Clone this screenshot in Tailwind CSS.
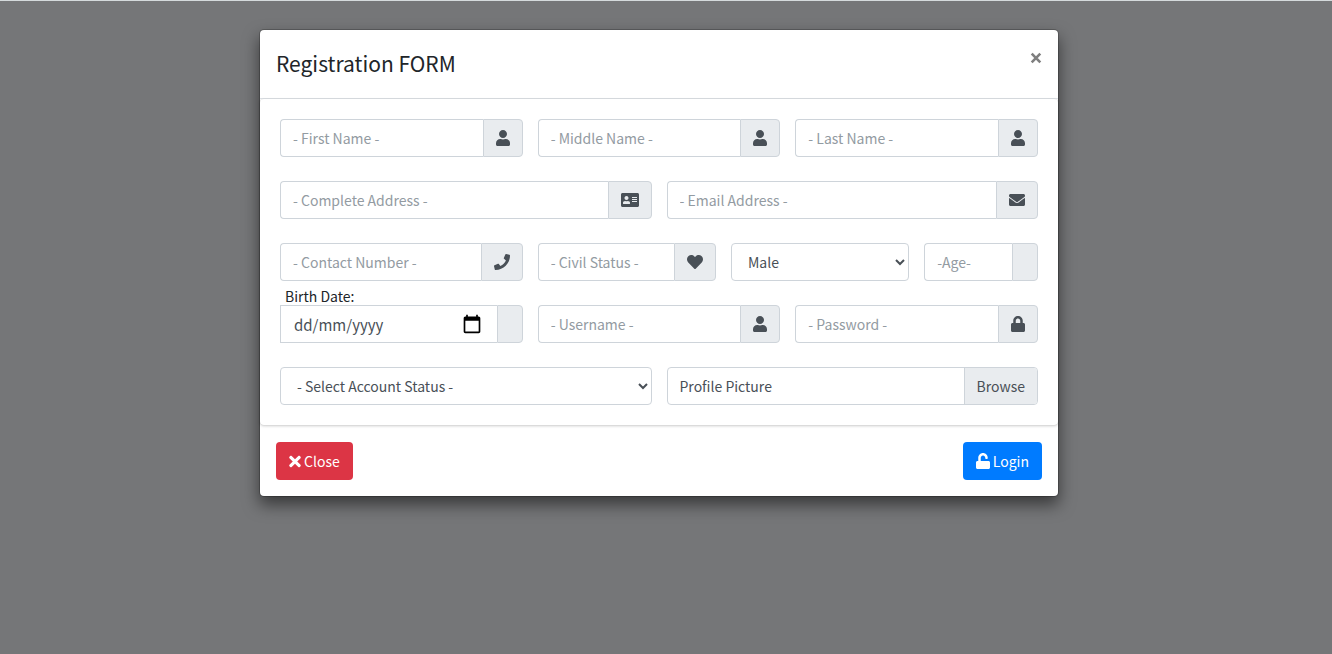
<!DOCTYPE html>
<html lang="en">
<head>
<meta charset="utf-8">
<meta name="viewport" content="width=device-width, initial-scale=1">
<title>Registration FORM</title>
<script src="https://cdn.jsdelivr.net/npm/@tailwindcss/browser@4"></script>
</head>
<body class="min-h-screen border-t border-[#d5dadc] bg-[#757678] pr-[14px] pt-7 font-['Noto_Sans_CJK_SC','Noto_Sans',sans-serif] text-sm leading-6 text-[#212529]">
<svg class="hidden" aria-hidden="true">
  <symbol id="user" viewBox="0 0 448 512"><path d="M224 256c70.7 0 128-57.3 128-128S294.700 0 224 0 96 57.300 96 128s57.300 128 128 128zm89.600 32h-16.700c-22.200 10.200-46.900 16-72.900 16s-50.600-5.800-72.900-16h-16.700C60.200 288 0 348.200 0 422.400V464c0 26.500 21.500 48 48 48h352c26.500 0 48-21.500 48-48v-41.600c0-74.200-60.200-134.400-134.400-134.400z"/></symbol>
  <symbol id="card" viewBox="0 0 576 512"><path fill-rule="evenodd" d="M528 32H48C21.500 32 0 53.500 0 80v352c0 26.500 21.500 48 48 48h480c26.500 0 48-21.500 48-48V80c0-26.500-21.500-48-48-48zM176 128c35.300 0 64 28.700 64 64s-28.700 64-64 64-64-28.700-64-64 28.700-64 64-64zm112 236.800c0 10.600-10 19.200-22.400 19.200H86.400C74 384 64 375.400 64 364.800v-19.200c0-31.800 30.100-57.600 67.200-57.600h5c12.300 5.100 25.700 8 39.800 8s27.600-2.900 39.800-8h5c37.100 0 67.200 25.800 67.200 57.600v19.200zM512 312c0 4.400-3.600 8-8 8H360c-4.400 0-8-3.600-8-8v-16c0-4.400 3.600-8 8-8h144c4.400 0 8 3.600 8 8v16zm0-64c0 4.400-3.600 8-8 8H360c-4.400 0-8-3.600-8-8v-16c0-4.400 3.600-8 8-8h144c4.400 0 8 3.600 8 8v16zm0-64c0 4.400-3.600 8-8 8H360c-4.400 0-8-3.600-8-8v-16c0-4.400 3.600-8 8-8h144c4.400 0 8 3.600 8 8v16z"/></symbol>
  <symbol id="envelope" viewBox="0 0 512 512"><path d="M502.300 190.800c3.900-3.100 9.700-.2 9.700 4.700V400c0 26.500-21.500 48-48 48H48c-26.500 0-48-21.500-48-48V195.600c0-5 5.700-7.800 9.700-4.700 22.400 17.400 52.100 39.500 154.100 113.600 21.100 15.400 56.700 47.800 92.200 47.600 35.700.3 72-32.800 92.300-47.600 102-74.100 131.600-96.300 154-113.700zM256 320c23.200.4 56.600-29.200 73.400-41.400 132.700-96.300 142.800-104.700 173.400-128.700 5.800-4.500 9.200-11.500 9.200-18.900v-19c0-26.500-21.500-48-48-48H48c-26.500 0-48 21.500-48 48v19c0 7.400 3.400 14.300 9.200 18.900 30.600 23.900 40.700 32.400 173.400 128.700 16.800 12.200 50.200 41.800 73.400 41.400z"/></symbol>
  <symbol id="phone" viewBox="0 0 512 512"><path d="M493.400 24.600l-104-24c-11.300-2.600-22.900 3.300-27.500 13.900l-48 112c-4.200 9.800-1.400 21.300 6.900 28l60.600 49.600c-36 76.700-98.900 140.500-177.200 177.200l-49.600-60.600c-6.800-8.300-18.200-11.100-28-6.900l-112 48C3.900 366.500-2 378.100.6 389.400l24 104C27.100 504.200 36.700 512 48 512c256.100 0 464-207.500 464-464 0-11.200-7.700-20.900-18.600-23.400z"/></symbol>
  <symbol id="heart" viewBox="0 0 512 512"><path d="M462.300 62.600C407.500 15.900 326 24.300 275.700 76.200L256 96.500l-19.700-20.300C186.100 24.300 104.500 15.900 49.700 62.600c-62.800 53.600-66.100 149.800-9.900 207.900l193.500 199.800c12.500 12.900 32.800 12.900 45.300 0l193.500-199.800c56.300-58.100 53-154.300-9.800-207.900z"/></symbol>
  <symbol id="lock" viewBox="0 0 448 512"><path d="M400 224h-24v-72C376 68.200 307.800 0 224 0S72 68.200 72 152v72H48c-26.500 0-48 21.500-48 48v192c0 26.500 21.500 48 48 48h352c26.500 0 48-21.500 48-48V272c0-26.500-21.500-48-48-48zm-104 0H152v-72c0-39.700 32.300-72 72-72s72 32.300 72 72v72z"/></symbol>
  <symbol id="unlock" viewBox="0 0 448 512"><path d="M400 256H152V152.900c0-39.600 31.700-72.500 71.300-72.900 40-.4 72.700 32.100 72.700 72v16c0 13.300 10.700 24 24 24h32c13.300 0 24-10.700 24-24v-16C376 68 307.500-.3 223.500 0 139.500.3 72 69.500 72 153.500V256H48c-26.500 0-48 21.500-48 48v160c0 26.500 21.500 48 48 48h352c26.500 0 48-21.500 48-48V304c0-26.500-21.500-48-48-48z"/></symbol>
  <symbol id="times" viewBox="0 0 352 512"><path d="M242.700 256l100.100-100.100c12.300-12.300 12.300-32.200 0-44.500l-22.200-22.200c-12.300-12.300-32.200-12.300-44.500 0L176 189.300 75.900 89.200c-12.300-12.300-32.200-12.300-44.500 0L9.200 111.500c-12.300 12.300-12.300 32.200 0 44.500L109.300 256 9.200 356.100c-12.300 12.300-12.300 32.200 0 44.500l22.200 22.200c12.300 12.300 32.200 12.300 44.500 0L176 322.700l100.100 100.100c12.300 12.300 32.200 12.300 44.500 0l22.200-22.200c12.300-12.300 12.300-32.200 0-44.500L242.700 256z"/></symbol>
  <symbol id="calendar" viewBox="0 0 24 24"><path d="M20 3h-1V1h-2v2H7V1H5v2H4c-1.100 0-2 .9-2 2v16c0 1.100.9 2 2 2h16c1.100 0 2-.9 2-2V5c0-1.100-.9-2-2-2zm0 18H4V8h16v13z"/></symbol>
</svg>

<div role="dialog" aria-labelledby="title" class="mx-auto max-w-[800px] rounded-[5px] border border-black/20 bg-white bg-clip-padding shadow-[0_8px_16px_rgba(0,0,0,0.5)]">
  <header class="flex items-start justify-between border-b border-[#dee2e6] p-4">
    <h1 id="title" class="pb-0.5 text-[21px] leading-[34px]">Registration FORM</h1>
    <button type="button" aria-label="Close dialog" class="flex h-6 w-3 items-center justify-center text-[#7f7f7f]"><svg viewBox="0 0 12 12" class="size-3 fill-none stroke-current stroke-[2.6]"><path d="M1.700 1.700l8.600 8.600M10.300 1.700l-8.600 8.600"/></svg></button>
  </header>

  <form>
    <div class="flex flex-col gap-6 rounded-[4px] p-5 text-[#495057] shadow-[0_0_1px_rgba(0,0,0,0.13),0_1px_3px_rgba(0,0,0,0.2)]">
      <div class="grid grid-cols-12 gap-[15px]">
        <div class="col-span-4 flex h-[38px]">
          <input type="text" aria-label="First name" placeholder="- First Name -" class="min-w-0 flex-1 rounded-l-[4px] border border-r-0 border-[#ced4da] px-3 placeholder:text-[#939ba2]">
          <span class="flex items-center rounded-r-[4px] border border-[#ced4da] bg-[#e9ecef] px-3"><svg class="h-4 w-3.5 fill-current"><use href="#user"/></svg></span>
        </div>
        <div class="col-span-4 flex h-[38px]">
          <input type="text" aria-label="Middle name" placeholder="- Middle Name -" class="min-w-0 flex-1 rounded-l-[4px] border border-r-0 border-[#ced4da] px-3 placeholder:text-[#939ba2]">
          <span class="flex items-center rounded-r-[4px] border border-[#ced4da] bg-[#e9ecef] px-3"><svg class="h-4 w-3.5 fill-current"><use href="#user"/></svg></span>
        </div>
        <div class="col-span-4 flex h-[38px]">
          <input type="text" aria-label="Last name" placeholder="- Last Name -" class="min-w-0 flex-1 rounded-l-[4px] border border-r-0 border-[#ced4da] px-3 placeholder:text-[#939ba2]">
          <span class="flex items-center rounded-r-[4px] border border-[#ced4da] bg-[#e9ecef] px-3"><svg class="h-4 w-3.5 fill-current"><use href="#user"/></svg></span>
        </div>
      </div>

      <div class="grid grid-cols-2 gap-[15px]">
        <div class="flex h-[38px]">
          <input type="text" aria-label="Complete address" placeholder="- Complete Address -" class="min-w-0 flex-1 rounded-l-[4px] border border-r-0 border-[#ced4da] px-3 placeholder:text-[#939ba2]">
          <span class="flex items-center rounded-r-[4px] border border-[#ced4da] bg-[#e9ecef] px-3"><svg class="h-4 w-[18px] fill-current"><use href="#card"/></svg></span>
        </div>
        <div class="flex h-[38px]">
          <input type="email" aria-label="Email address" placeholder="- Email Address -" class="min-w-0 flex-1 rounded-l-[4px] border border-r-0 border-[#ced4da] px-3 placeholder:text-[#939ba2]">
          <span class="flex items-center rounded-r-[4px] border border-[#ced4da] bg-[#e9ecef] px-3"><svg class="size-4 fill-current"><use href="#envelope"/></svg></span>
        </div>
      </div>

      <div>
        <div class="grid grid-cols-12 gap-[15px]">
          <div class="col-span-4 flex h-[38px]">
            <input type="tel" aria-label="Contact number" placeholder="- Contact Number -" class="min-w-0 flex-1 rounded-l-[4px] border border-r-0 border-[#ced4da] px-3 placeholder:text-[#939ba2]">
            <span class="flex items-center rounded-r-[4px] border border-[#ced4da] bg-[#e9ecef] px-3"><svg class="size-4 fill-current"><use href="#phone"/></svg></span>
          </div>
          <div class="col-span-3 flex h-[38px]">
            <input type="text" aria-label="Civil status" placeholder="- Civil Status -" class="min-w-0 flex-1 rounded-l-[4px] border border-r-0 border-[#ced4da] px-3 placeholder:text-[#939ba2]">
            <span class="flex items-center rounded-r-[4px] border border-[#ced4da] bg-[#e9ecef] px-3"><svg class="size-4 fill-current"><use href="#heart"/></svg></span>
          </div>
          <select aria-label="Gender" class="col-span-3 h-[38px] min-w-0 rounded-[4px] border border-[#ced4da] bg-white pl-3"><option>Male</option><option>Female</option></select>
          <div class="col-span-2 flex h-[38px]">
            <input type="text" aria-label="Age" placeholder="-Age-" class="min-w-0 flex-1 rounded-l-[4px] border border-r-0 border-[#ced4da] px-3 placeholder:text-[#939ba2]">
            <span class="rounded-r-[4px] border border-[#ced4da] bg-[#e9ecef] px-3"></span>
          </div>
        </div>

        <div class="grid grid-cols-12 items-end gap-x-[15px]">
          <div class="col-span-4">
            <label for="birth" class="flex h-6 items-end pl-[5px] leading-[18px] text-[#212529]">Birth Date:</label>
            <div class="flex h-[38px]">
              <div class="flex min-w-0 flex-1 items-center border border-r-0 border-[#ced4da] pr-[15px]">
                <input id="birth" type="text" placeholder="dd/mm/yyyy" class="h-full min-w-0 flex-1 pl-[13px] text-[15px] placeholder:text-[#495057]">
                <button type="button" aria-label="Open calendar" class="text-black"><svg class="size-5 fill-current"><use href="#calendar"/></svg></button>
              </div>
              <span class="rounded-r-[4px] border border-[#ced4da] bg-[#e9ecef] px-3"></span>
            </div>
          </div>
          <div class="col-span-4 flex h-[38px]">
            <input type="text" aria-label="Username" placeholder="- Username -" class="min-w-0 flex-1 rounded-l-[4px] border border-r-0 border-[#ced4da] px-3 placeholder:text-[#939ba2]">
            <span class="flex items-center rounded-r-[4px] border border-[#ced4da] bg-[#e9ecef] px-3"><svg class="h-4 w-3.5 fill-current"><use href="#user"/></svg></span>
          </div>
          <div class="col-span-4 flex h-[38px]">
            <input type="password" aria-label="Password" placeholder="- Password -" class="min-w-0 flex-1 rounded-l-[4px] border border-r-0 border-[#ced4da] px-3 placeholder:text-[#939ba2]">
            <span class="flex items-center rounded-r-[4px] border border-[#ced4da] bg-[#e9ecef] px-3"><svg class="h-4 w-3.5 fill-current"><use href="#lock"/></svg></span>
          </div>
        </div>
      </div>

      <div class="grid grid-cols-2 gap-[15px]">
        <select aria-label="Account status" class="h-[38px] min-w-0 rounded-[4px] border border-[#ced4da] bg-white pl-3"><option>- Select Account Status -</option><option>Active</option><option>Inactive</option></select>
        <label class="flex h-[38px] items-center overflow-hidden rounded-[4px] border border-[#ced4da]">
          <input type="file" class="sr-only">
          <span class="flex-1 px-3">Profile Picture</span>
          <span class="flex h-full items-center border-l border-[#ced4da] bg-[#e9ecef] px-3">Browse</span>
        </label>
      </div>
    </div>

    <footer class="flex items-center justify-between p-4 pt-[17px] text-white">
      <button type="button" class="flex h-[38px] items-center gap-[3px] rounded-[4px] bg-[#dc3545] px-[13px]"><svg class="h-[17px] w-3 fill-current"><use href="#times"/></svg>Close</button>
      <button type="submit" class="flex h-[38px] items-center gap-[3px] rounded-[4px] bg-[#007bff] px-[13px]"><svg class="h-4 w-3.5 fill-current"><use href="#unlock"/></svg>Login</button>
    </footer>
  </form>
</div>
</body>
</html>
